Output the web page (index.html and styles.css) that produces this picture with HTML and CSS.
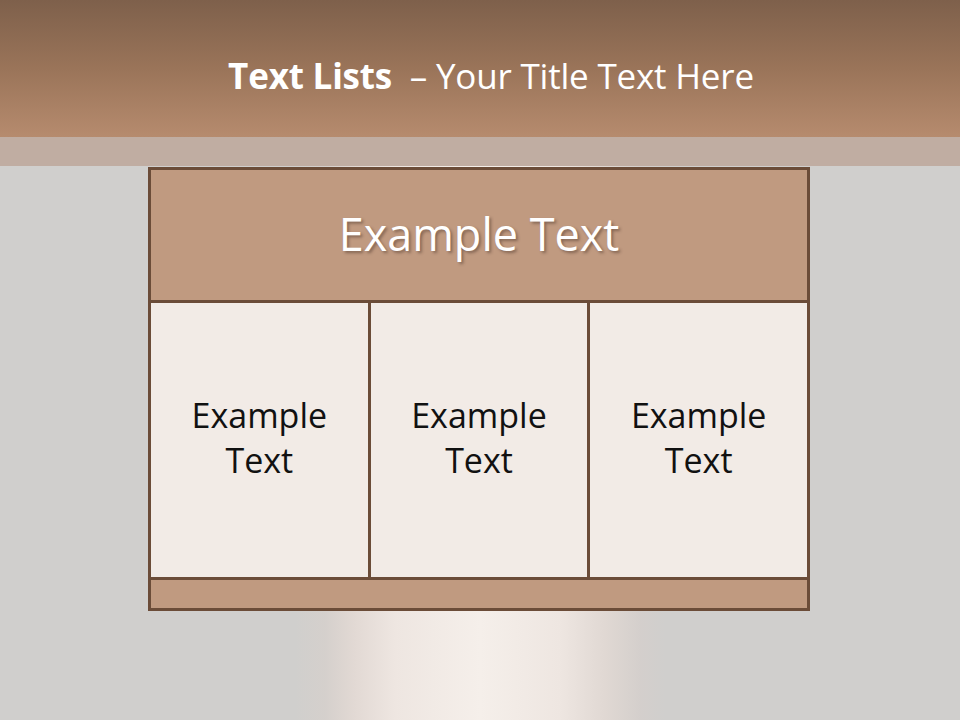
FILE: index.html
```html
<!DOCTYPE html>
<html>
<head>
<meta charset="utf-8">
<link rel="stylesheet" href="styles.css">
</head>
<body>
<div class="slide">
  <header class="title-bar">
    <h1><b>Text Lists</b>&nbsp; – Your Title Text Here</h1>
  </header>
  <div class="band"></div>
  <main class="content">
    <div class="grid">
      <div class="head">Example Text</div>
      <div class="cell">Example<br>Text</div>
      <div class="cell">Example<br>Text</div>
      <div class="cell">Example<br>Text</div>
      <div class="foot"></div>
    </div>
  </main>
</div>
</body>
</html>
```
FILE: styles.css
```css
html, body { margin: 0; padding: 0; }
body { width: 960px; height: 720px; overflow: hidden; font-family: "Open Sans", "DejaVu Sans", sans-serif; }
.slide {
  width: 960px; height: 720px;
  display: flex; flex-direction: column;
  background:
    linear-gradient(to right,
      rgba(208,207,205,0) 295px,
      rgba(214,208,204,0.8) 325px,
      #e2d9d4 355px,
      #eee6e1 395px,
      #f5efea 480px,
      #eee6e1 560px,
      #e0d8d3 605px,
      rgba(213,207,204,0.8) 640px,
      rgba(208,207,205,0) 665px),
    #d0cfcd;
}
.title-bar {
  height: 137px;
  background: linear-gradient(to bottom, #7e604b 0%, #9a7459 50%, #b68b6e 100%);
  display: flex; align-items: center; justify-content: center;
}
.title-bar h1 {
  margin: 0; padding-left: 22px;
  color: #fff; font-weight: 400; font-size: 35px; letter-spacing: -0.2px;
  padding-top: 14px;
}
.title-bar b { font-weight: 700; }
.band { height: 29px; background: #c0ada2; }
.content { padding-top: 1px; padding-left: 148px; }
.grid {
  width: 656px;
  padding: 3px; gap: 3px;
  background: #6b4c38;
  display: grid;
  grid-template-columns: 1fr 1fr 1fr;
  grid-template-rows: 130px 274px 28px;
}
.head {
  grid-column: 1 / 4;
  background: #c09a80;
  color: #fff; font-size: 45px;
  display: flex; align-items: center; justify-content: center;
  padding-bottom: 4px;
  text-shadow: 2px 2px 3px rgba(60,40,30,0.45);
}
.cell {
  background: #f2ebe6;
  color: #111; font-size: 34px; line-height: 45px;
  display: flex; align-items: center; justify-content: center; text-align: center;
  padding-bottom: 4px;
}
.foot { grid-column: 1 / 4; background: #c09a80; }
```
